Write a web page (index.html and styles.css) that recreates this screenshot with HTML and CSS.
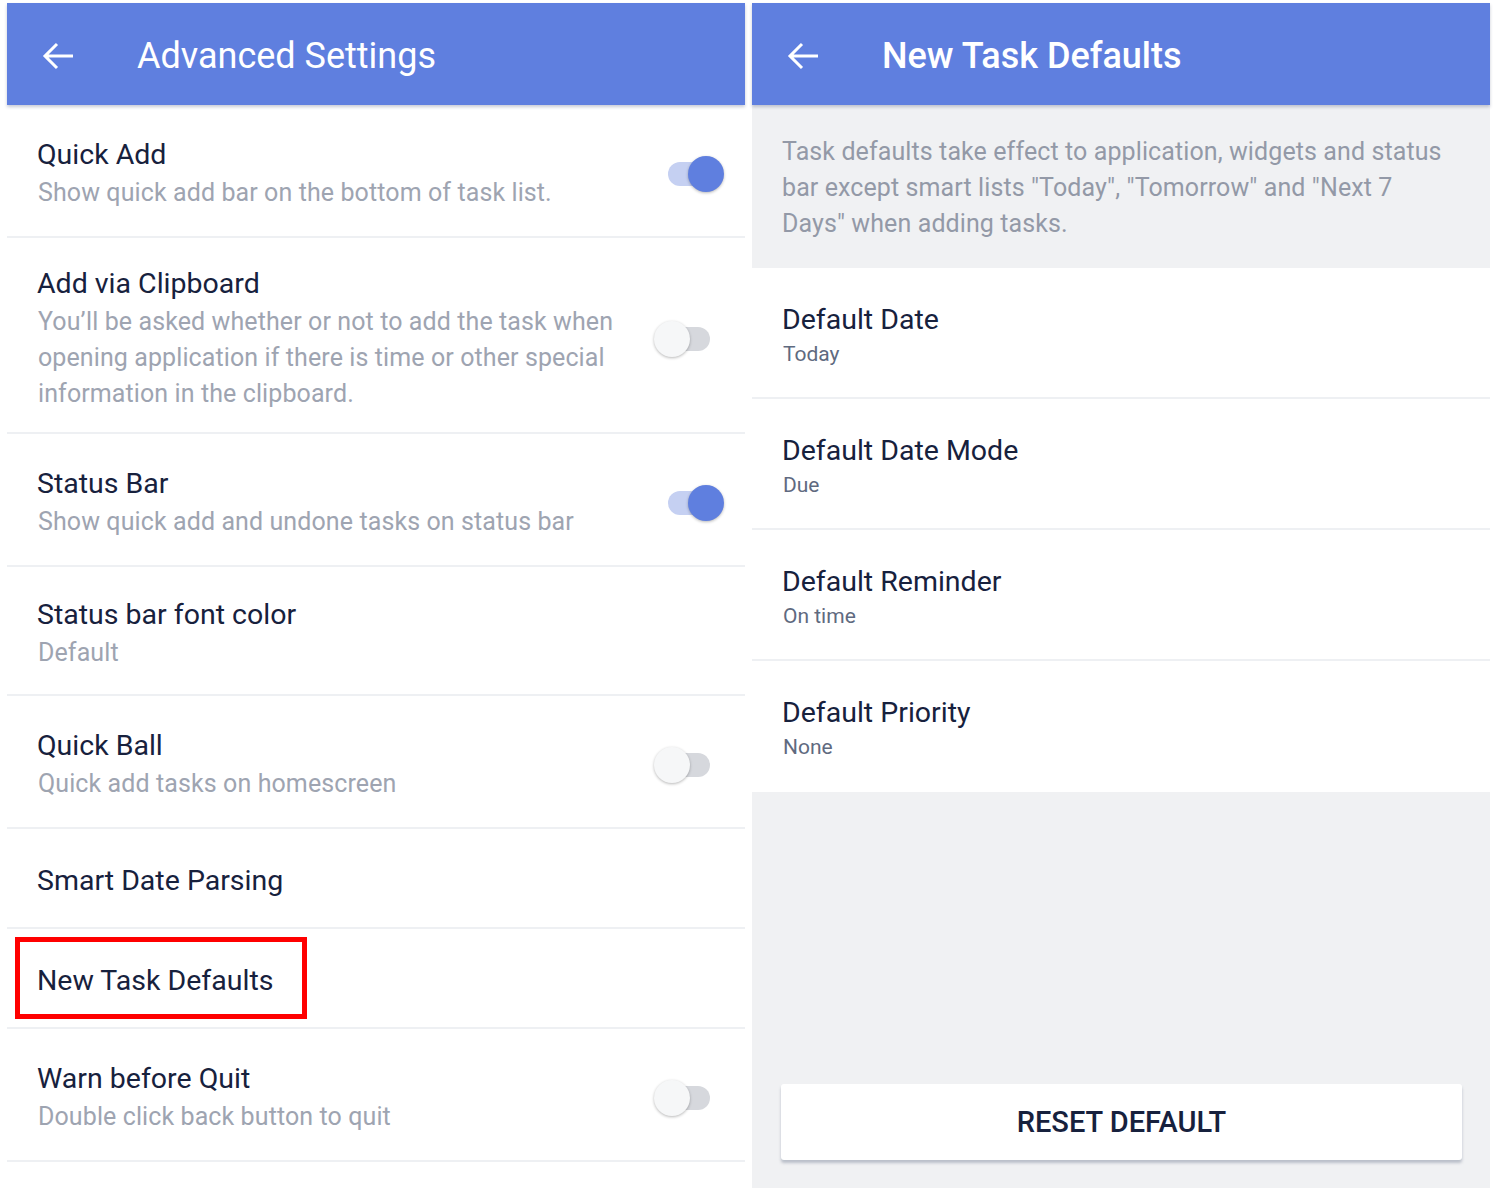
FILE: index.html
```html
<!DOCTYPE html>
<html>
<head>
<meta charset="utf-8">
<link rel="stylesheet" href="styles.css">
</head>
<body>
<div class="screens">
  <section class="panel panel-left">
    <header class="appbar">
      <svg class="back" viewBox="0 0 32 32" width="32" height="32"><path d="M3 16H31M15 4L3 16L15 28" fill="none" stroke="#fff" stroke-width="3"/></svg>
      <h1 class="appbar-title">Advanced Settings</h1>
    </header>
    <div class="list">
      <div class="row">
        <div class="row-text">
          <div class="row-title">Quick Add</div>
          <div class="row-sub">Show quick add bar on the bottom of task list.</div>
        </div>
        <span class="switch on"><span class="knob"></span></span>
      </div>
      <div class="row row-tall">
        <div class="row-text">
          <div class="row-title">Add via Clipboard</div>
          <div class="row-sub">You’ll be asked whether or not to add the task when opening application if there is time or other special information in the clipboard.</div>
        </div>
        <span class="switch"><span class="knob"></span></span>
      </div>
      <div class="row">
        <div class="row-text">
          <div class="row-title">Status Bar</div>
          <div class="row-sub">Show quick add and undone tasks on status bar</div>
        </div>
        <span class="switch on"><span class="knob"></span></span>
      </div>
      <div class="row row-short">
        <div class="row-text">
          <div class="row-title">Status bar font color</div>
          <div class="row-sub">Default</div>
        </div>
      </div>
      <div class="row">
        <div class="row-text">
          <div class="row-title">Quick Ball</div>
          <div class="row-sub">Quick add tasks on homescreen</div>
        </div>
        <span class="switch"><span class="knob"></span></span>
      </div>
      <div class="row row-single">
        <div class="row-text">
          <div class="row-title">Smart Date Parsing</div>
        </div>
      </div>
      <div class="row row-single">
        <div class="row-text">
          <div class="row-title">New Task Defaults</div>
        </div>
        <span class="highlight"></span>
      </div>
      <div class="row">
        <div class="row-text">
          <div class="row-title">Warn before Quit</div>
          <div class="row-sub">Double click back button to quit</div>
        </div>
        <span class="switch"><span class="knob"></span></span>
      </div>
    </div>
  </section>

  <section class="panel panel-right">
    <header class="appbar">
      <svg class="back" viewBox="0 0 32 32" width="32" height="32"><path d="M3 16H31M15 4L3 16L15 28" fill="none" stroke="#fff" stroke-width="3"/></svg>
      <h1 class="appbar-title bold">New Task Defaults</h1>
    </header>
    <p class="info">Task defaults take effect to application, widgets and status bar except smart lists "Today", "Tomorrow" and "Next 7 Days" when adding tasks.</p>
    <div class="dlist">
      <div class="drow">
        <div class="row-title">Default Date</div>
        <div class="drow-sub">Today</div>
      </div>
      <div class="drow">
        <div class="row-title">Default Date Mode</div>
        <div class="drow-sub">Due</div>
      </div>
      <div class="drow">
        <div class="row-title">Default Reminder</div>
        <div class="drow-sub">On time</div>
      </div>
      <div class="drow">
        <div class="row-title">Default Priority</div>
        <div class="drow-sub">None</div>
      </div>
    </div>
    <div class="spacer"></div>
    <div class="footer">
      <button class="reset">RESET DEFAULT</button>
    </div>
  </section>
</div>
</body>
</html>
```

FILE: styles.css
```css
* { box-sizing: border-box; }
html, body {
  margin: 0;
  padding: 0;
  background: #ffffff;
  font-family: Roboto, "Noto Sans", "Liberation Sans", sans-serif;
}
.screens {
  display: flex;
  gap: 7px;
  padding: 3px 9px 4px 7px;
  width: 1500px;
  height: 1192px;
}
.panel {
  width: 738px;
  display: flex;
  flex-direction: column;
}
.panel-left { background: #ffffff; }
.panel-right { background: #f0f1f3; }

.appbar {
  height: 102px;
  background: #5f7fdf;
  display: flex;
  align-items: center;
  padding: 4px 0 0 35px;
  box-shadow: 0 2px 3px rgba(40, 50, 90, 0.25);
  position: relative;
  z-index: 1;
  flex: none;
}
.back { flex: none; }
.appbar-title {
  margin: 0 0 0 63px;
  color: #ffffff;
  font-size: 36px;
  font-weight: 400;
  letter-spacing: 0;
}
.appbar-title.bold { font-weight: 500; }

.row {
  display: flex;
  align-items: center;
  padding: 32px 0 25px 30px;
  border-bottom: 2px solid #eef0f3;
  position: relative;
}
.row-tall { padding: 28px 0 20px 30px; }
.row-short { padding: 30px 0 23px 30px; }
.row-single { padding: 34px 0 28px 30px; }
.row-text { flex: 1; min-width: 0; }
.row-title {
  font-size: 28.5px;
  line-height: 36px;
  color: #17213d;
}
.row-sub {
  margin-top: 2px;
  font-size: 25px;
  line-height: 36px;
  letter-spacing: 0.1px;
  color: #9ea4b1;
  padding-left: 1px;
  max-width: 600px;
}

.switch {
  position: relative;
  width: 44px;
  height: 24px;
  border-radius: 12px;
  background: #d6d8dd;
  flex: none;
  margin: 0 35px 0 24px;
}
.switch .knob {
  position: absolute;
  top: -6px;
  left: -12px;
  width: 36px;
  height: 36px;
  border-radius: 50%;
  background: #f6f7f8;
  box-shadow: 0 1px 3px rgba(0, 0, 0, 0.28);
}
.switch.on {
  background: #c5d0f2;
  margin-right: 33px;
}
.switch.on .knob {
  left: auto;
  right: -12px;
  background: #5f7fdf;
}

.highlight {
  position: absolute;
  left: 8px;
  top: 8px;
  width: 292px;
  height: 82px;
  border: 5px solid #ff0000;
}

.info {
  margin: 0;
  padding: 29px 30px 26px 30px;
  font-size: 25px;
  line-height: 36px;
  letter-spacing: 0.1px;
  color: #9399a7;
  flex: none;
}
.dlist { background: #ffffff; flex: none; }
.drow {
  padding: 34px 30px 29px 30px;
  border-bottom: 2px solid #eef0f3;
}
.drow:last-child { border-bottom: none; padding-bottom: 31px; }
.drow-sub {
  margin-top: 2px;
  padding-left: 1px;
  font-size: 21px;
  line-height: 28px;
  color: #5f6a80;
}
.spacer { flex: 1; }
.footer {
  padding: 0 28px 28px 29px;
  flex: none;
}
.reset {
  width: 100%;
  height: 76px;
  border: none;
  border-radius: 3px;
  background: #ffffff;
  box-shadow: 0 3px 3px rgba(120, 130, 150, 0.45);
  font-family: Roboto, "Noto Sans", "Liberation Sans", sans-serif;
  font-size: 29px;
  font-weight: 500;
  color: #17213d;
  letter-spacing: 0;
}
```
